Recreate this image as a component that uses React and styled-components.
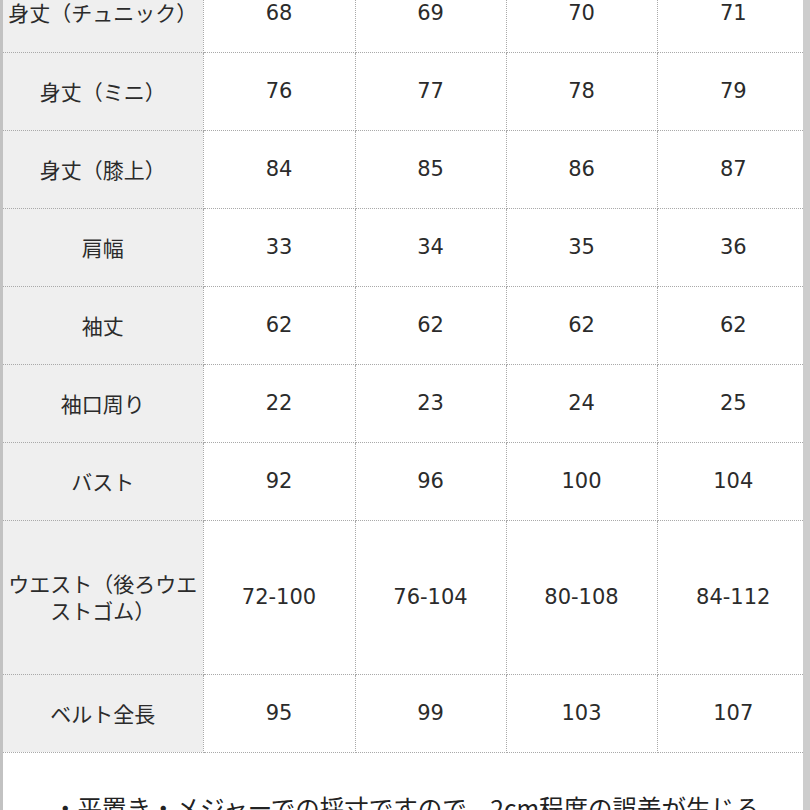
import React from "react"
import styled, { createGlobalStyle } from "styled-components"

const GlobalStyle = createGlobalStyle`
  html, body {
    margin: 0;
    padding: 0;
    background: #ffffff;
    overflow: hidden;
  }
`

const Page = styled.div`
  box-sizing: border-box;
  width: 810px;
  height: 810px;
  overflow: hidden;
  background: #ffffff;
  border-left: 3px solid #c2c2c2;
  border-right: 7px solid #cdcdcd;
`

const Table = styled.table`
  border-collapse: collapse;
  table-layout: fixed;
  width: 800px;
  margin-top: -26px;
  color: #2b2b2b;
`

const Col = styled.col`
  width: ${(props) => props.w}px;
`

const Row = styled.tr`
  height: ${(props) => props.h}px;
`

const Label = styled.th`
  box-sizing: border-box;
  padding: 0 3px;
  background: #efefef;
  font-family: "Noto Sans CJK JP", "Noto Sans", sans-serif;
  font-weight: 400;
  font-size: 21px;
  line-height: 27px;
  text-align: center;
  vertical-align: middle;
  border-bottom: 1px dotted #a9a9a9;
  border-right: 1px dotted #a9a9a9;
`

const Cell = styled.td`
  padding: 0 0 0 ${(props) => (props.last ? 6 : 0)}px;
  font-family: "DejaVu Sans", "Noto Sans CJK JP", sans-serif;
  font-size: 21px;
  text-align: center;
  vertical-align: middle;
  border-bottom: 1px dotted #a9a9a9;
  border-right: ${(props) => (props.last ? "none" : "1px dotted #a9a9a9")};
`

const Note = styled.p`
  margin: 38px 0 0 50px;
  font-family: "Noto Sans CJK JP", sans-serif;
  font-size: 24.5px;
  line-height: 34px;
  color: #222;
  white-space: nowrap;
`

const widths = [200, 152, 151, 151, 146]

const rows = [
  ["身丈（チュニック）", "68", "69", "70", "71"],
  ["身丈（ミニ）", "76", "77", "78", "79"],
  ["身丈（膝上）", "84", "85", "86", "87"],
  ["肩幅", "33", "34", "35", "36"],
  ["袖丈", "62", "62", "62", "62"],
  ["袖口周り", "22", "23", "24", "25"],
  ["バスト", "92", "96", "100", "104"],
  ["ウエスト（後ろウエストゴム）", "72-100", "76-104", "80-108", "84-112", 154],
  ["ベルト全長", "95", "99", "103", "107"],
]

const App = () => (
  <>
    <GlobalStyle />
    <Page>
      <Table>
        <colgroup>
          {widths.map((w, i) => (
            <Col key={i} w={w} />
          ))}
        </colgroup>
        <tbody>
          {rows.map(([label, a, b, c, d, h]) => (
            <Row key={label} h={h || 78}>
              <Label>{label}</Label>
              <Cell>{a}</Cell>
              <Cell>{b}</Cell>
              <Cell>{c}</Cell>
              <Cell last>{d}</Cell>
            </Row>
          ))}
        </tbody>
      </Table>
      <Note>・平置き・メジャーでの採寸ですので、2cm程度の誤差が生じる</Note>
    </Page>
  </>
)

export default App
